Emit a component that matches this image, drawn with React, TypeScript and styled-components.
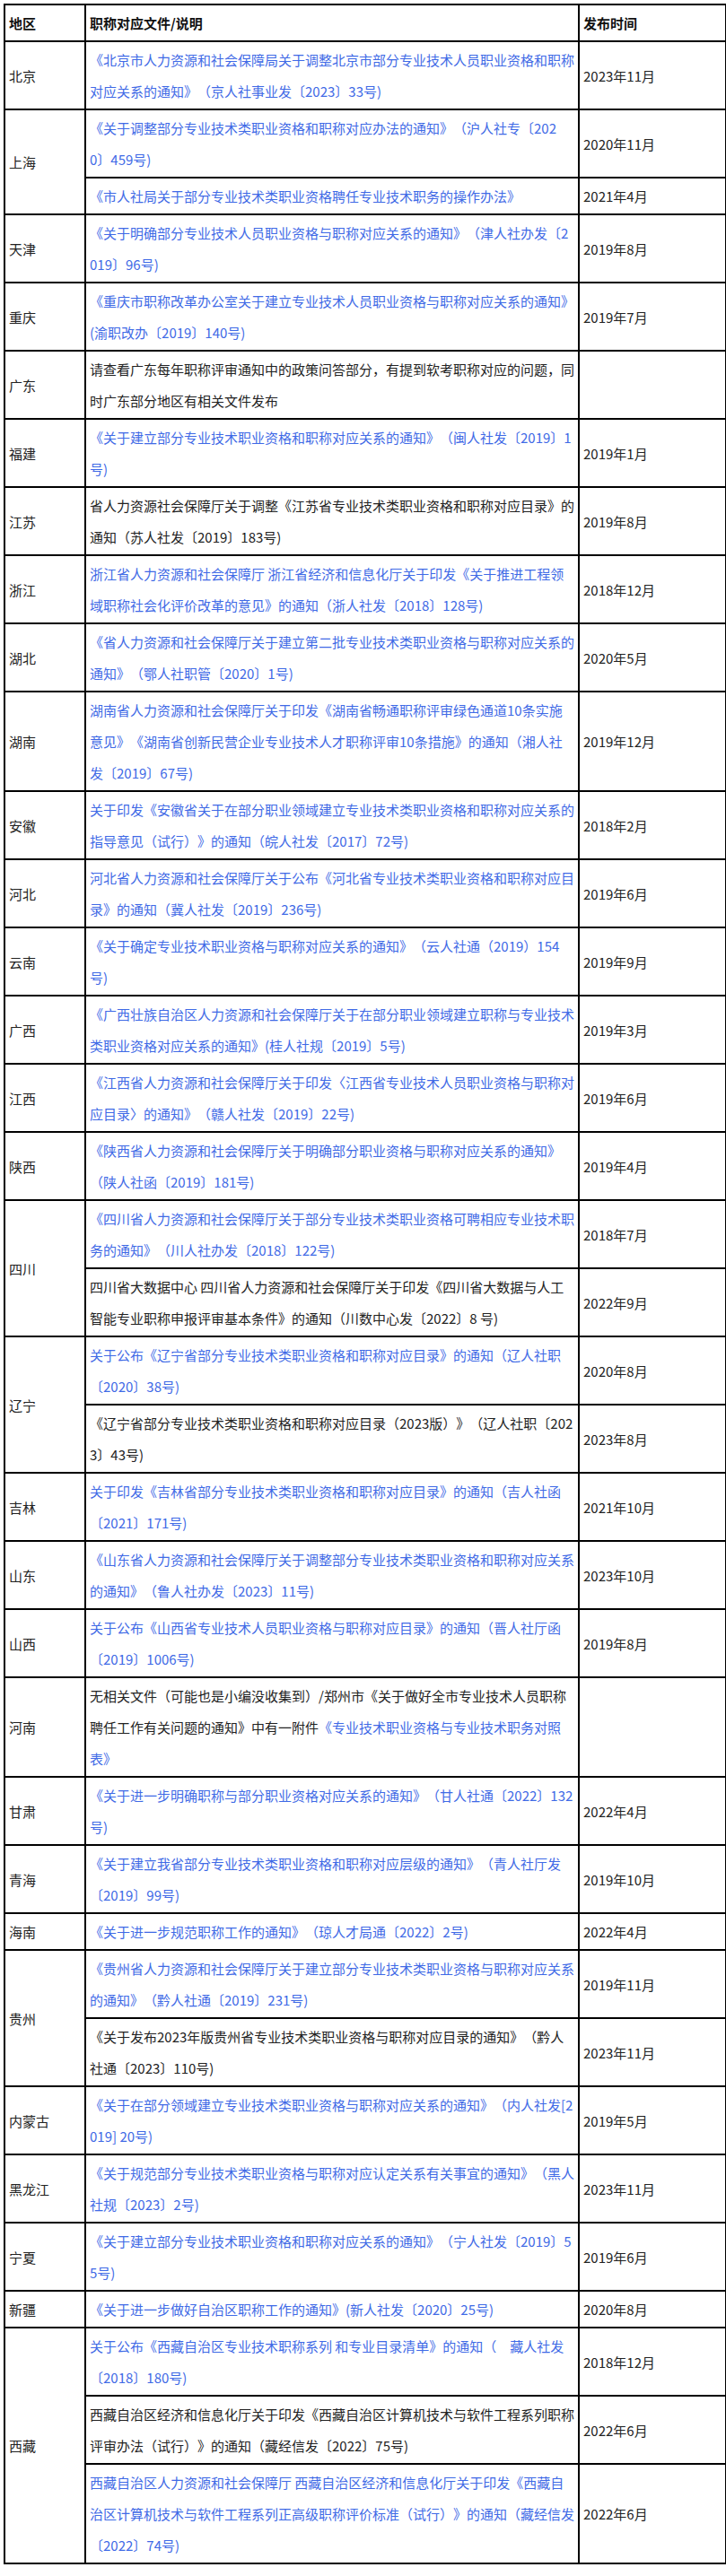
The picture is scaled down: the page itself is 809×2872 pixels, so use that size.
import styled, { createGlobalStyle } from "styled-components";

type Part = { text: string; plain?: boolean };
type Doc = { parts: Part[]; date: string };
type Region = { name: string; docs: Doc[] };

const link = (text: string): Part => ({ text });
const plain = (text: string): Part => ({ text, plain: true });

const regions: Region[] = [
  {
    name: "北京",
    docs: [
      {
        parts: [link("《北京市人力资源和社会保障局关于调整北京市部分专业技术人员职业资格和职称对应关系的通知》（京人社事业发〔2023〕33号)")],
        date: "2023年11月",
      },
    ],
  },
  {
    name: "上海",
    docs: [
      {
        parts: [link("《关于调整部分专业技术类职业资格和职称对应办法的通知》（沪人社专〔2020〕459号)")],
        date: "2020年11月",
      },
      {
        parts: [link("《市人社局关于部分专业技术类职业资格聘任专业技术职务的操作办法》")],
        date: "2021年4月",
      },
    ],
  },
  {
    name: "天津",
    docs: [
      {
        parts: [link("《关于明确部分专业技术人员职业资格与职称对应关系的通知》（津人社办发〔2019〕96号)")],
        date: "2019年8月",
      },
    ],
  },
  {
    name: "重庆",
    docs: [
      {
        parts: [link("《重庆市职称改革办公室关于建立专业技术人员职业资格与职称对应关系的通知》(渝职改办〔2019〕140号)")],
        date: "2019年7月",
      },
    ],
  },
  {
    name: "广东",
    docs: [
      {
        parts: [plain("请查看广东每年职称评审通知中的政策问答部分，有提到软考职称对应的问题，同时广东部分地区有相关文件发布")],
        date: "",
      },
    ],
  },
  {
    name: "福建",
    docs: [
      {
        parts: [link("《关于建立部分专业技术职业资格和职称对应关系的通知》（闽人社发〔2019〕1号)")],
        date: "2019年1月",
      },
    ],
  },
  {
    name: "江苏",
    docs: [
      {
        parts: [plain("省人力资源社会保障厅关于调整《江苏省专业技术类职业资格和职称对应目录》的通知（苏人社发〔2019〕183号)")],
        date: "2019年8月",
      },
    ],
  },
  {
    name: "浙江",
    docs: [
      {
        parts: [link("浙江省人力资源和社会保障厅 浙江省经济和信息化厅关于印发《关于推进工程领域职称社会化评价改革的意见》的通知（浙人社发〔2018〕128号)")],
        date: "2018年12月",
      },
    ],
  },
  {
    name: "湖北",
    docs: [
      {
        parts: [link("《省人力资源和社会保障厅关于建立第二批专业技术类职业资格与职称对应关系的通知》（鄂人社职管〔2020〕1号)")],
        date: "2020年5月",
      },
    ],
  },
  {
    name: "湖南",
    docs: [
      {
        parts: [link("湖南省人力资源和社会保障厅关于印发《湖南省畅通职称评审绿色通道10条实施意见》《湖南省创新民营企业专业技术人才职称评审10条措施》的通知（湘人社发〔2019〕67号)")],
        date: "2019年12月",
      },
    ],
  },
  {
    name: "安徽",
    docs: [
      {
        parts: [link("关于印发《安徽省关于在部分职业领域建立专业技术类职业资格和职称对应关系的指导意见（试行）》的通知（皖人社发〔2017〕72号)")],
        date: "2018年2月",
      },
    ],
  },
  {
    name: "河北",
    docs: [
      {
        parts: [link("河北省人力资源和社会保障厅关于公布《河北省专业技术类职业资格和职称对应目录》的通知（冀人社发〔2019〕236号)")],
        date: "2019年6月",
      },
    ],
  },
  {
    name: "云南",
    docs: [
      {
        parts: [link("《关于确定专业技术职业资格与职称对应关系的通知》（云人社通（2019）154号)")],
        date: "2019年9月",
      },
    ],
  },
  {
    name: "广西",
    docs: [
      {
        parts: [link("《广西壮族自治区人力资源和社会保障厅关于在部分职业领域建立职称与专业技术类职业资格对应关系的通知》(桂人社规〔2019〕5号)")],
        date: "2019年3月",
      },
    ],
  },
  {
    name: "江西",
    docs: [
      {
        parts: [link("《江西省人力资源和社会保障厅关于印发〈江西省专业技术人员职业资格与职称对应目录〉的通知》（赣人社发〔2019〕22号)")],
        date: "2019年6月",
      },
    ],
  },
  {
    name: "陕西",
    docs: [
      {
        parts: [link("《陕西省人力资源和社会保障厅关于明确部分职业资格与职称对应关系的通知》（陕人社函〔2019〕181号)")],
        date: "2019年4月",
      },
    ],
  },
  {
    name: "四川",
    docs: [
      {
        parts: [link("《四川省人力资源和社会保障厅关于部分专业技术类职业资格可聘相应专业技术职务的通知》（川人社办发〔2018〕122号)")],
        date: "2018年7月",
      },
      {
        parts: [plain("四川省大数据中心 四川省人力资源和社会保障厅关于印发《四川省大数据与人工智能专业职称申报评审基本条件》的通知（川数中心发〔2022〕8 号)")],
        date: "2022年9月",
      },
    ],
  },
  {
    name: "辽宁",
    docs: [
      {
        parts: [link("关于公布《辽宁省部分专业技术类职业资格和职称对应目录》的通知（辽人社职〔2020〕38号)")],
        date: "2020年8月",
      },
      {
        parts: [plain("《辽宁省部分专业技术类职业资格和职称对应目录（2023版）》（辽人社职〔2023〕43号)")],
        date: "2023年8月",
      },
    ],
  },
  {
    name: "吉林",
    docs: [
      {
        parts: [link("关于印发《吉林省部分专业技术类职业资格和职称对应目录》的通知（吉人社函〔2021〕171号)")],
        date: "2021年10月",
      },
    ],
  },
  {
    name: "山东",
    docs: [
      {
        parts: [link("《山东省人力资源和社会保障厅关于调整部分专业技术类职业资格和职称对应关系的通知》（鲁人社办发〔2023〕11号)")],
        date: "2023年10月",
      },
    ],
  },
  {
    name: "山西",
    docs: [
      {
        parts: [link("关于公布《山西省专业技术人员职业资格与职称对应目录》的通知（晋人社厅函〔2019〕1006号)")],
        date: "2019年8月",
      },
    ],
  },
  {
    name: "河南",
    docs: [
      {
        parts: [
          plain("无相关文件（可能也是小编没收集到）/郑州市《关于做好全市专业技术人员职称聘任工作有关问题的通知》中有一附件"),
          link("《专业技术职业资格与专业技术职务对照表》"),
        ],
        date: "",
      },
    ],
  },
  {
    name: "甘肃",
    docs: [
      {
        parts: [link("《关于进一步明确职称与部分职业资格对应关系的通知》（甘人社通〔2022〕132号)")],
        date: "2022年4月",
      },
    ],
  },
  {
    name: "青海",
    docs: [
      {
        parts: [link("《关于建立我省部分专业技术类职业资格和职称对应层级的通知》（青人社厅发〔2019〕99号)")],
        date: "2019年10月",
      },
    ],
  },
  {
    name: "海南",
    docs: [
      {
        parts: [link("《关于进一步规范职称工作的通知》（琼人才局通〔2022〕2号)")],
        date: "2022年4月",
      },
    ],
  },
  {
    name: "贵州",
    docs: [
      {
        parts: [link("《贵州省人力资源和社会保障厅关于建立部分专业技术类职业资格与职称对应关系的通知》（黔人社通〔2019〕231号)")],
        date: "2019年11月",
      },
      {
        parts: [plain("《关于发布2023年版贵州省专业技术类职业资格与职称对应目录的通知》（黔人社通〔2023〕110号)")],
        date: "2023年11月",
      },
    ],
  },
  {
    name: "内蒙古",
    docs: [
      {
        parts: [link("《关于在部分领域建立专业技术类职业资格与职称对应关系的通知》（内人社发[2019] 20号)")],
        date: "2019年5月",
      },
    ],
  },
  {
    name: "黑龙江",
    docs: [
      {
        parts: [link("《关于规范部分专业技术类职业资格与职称对应认定关系有关事宜的通知》（黑人社规〔2023〕2号)")],
        date: "2023年11月",
      },
    ],
  },
  {
    name: "宁夏",
    docs: [
      {
        parts: [link("《关于建立部分专业技术职业资格和职称对应关系的通知》（宁人社发〔2019〕55号)")],
        date: "2019年6月",
      },
    ],
  },
  {
    name: "新疆",
    docs: [
      {
        parts: [link("《关于进一步做好自治区职称工作的通知》(新人社发〔2020〕25号)")],
        date: "2020年8月",
      },
    ],
  },
  {
    name: "西藏",
    docs: [
      {
        parts: [link("关于公布《西藏自治区专业技术职称系列 和专业目录清单》的通知（　藏人社发〔2018〕180号)")],
        date: "2018年12月",
      },
      {
        parts: [plain("西藏自治区经济和信息化厅关于印发《西藏自治区计算机技术与软件工程系列职称评审办法（试行）》的通知（藏经信发〔2022〕75号)")],
        date: "2022年6月",
      },
      {
        parts: [link("西藏自治区人力资源和社会保障厅 西藏自治区经济和信息化厅关于印发《西藏自治区计算机技术与软件工程系列正高级职称评价标准（试行）》的通知（藏经信发〔2022〕74号)")],
        date: "2022年6月",
      },
    ],
  },
];

const GlobalStyle = createGlobalStyle`
  body {
    margin: 0;
    background: #fff;
    font-family: "Noto Sans CJK SC", "Noto Sans", sans-serif;
    color: #222;
  }
`;

const Page = styled.div`
  padding: 4px 1px 4px 4px;
`;

const Table = styled.table`
  width: 804px;
  table-layout: fixed;
  border-collapse: collapse;
  font-size: 15px;
  line-height: 35px;
  word-break: break-all;
  text-spacing-trim: space-all;
  font-feature-settings: "halt" 0, "chws" 0;
`;

const Cell = styled.td`
  border: 2px solid #000;
  padding: 2px 3.5px 2px 4px;
  vertical-align: middle;
  text-align: left;
`;

const HeadCell = styled.th`
  border: 2px solid #000;
  padding: 2px 3.5px 2px 4px;
  font-weight: bold;
  text-align: left;
  color: #111;
`;

const Doc = styled.span<{ $plain?: boolean }>`
  color: ${(p) => (p.$plain ? "#222" : "#3f6ae6")};
`;

export default function App() {
  return (
    <Page>
      <GlobalStyle />
      <Table>
        <colgroup>
          <col style={{ width: 90 }} />
          <col style={{ width: 550 }} />
          <col style={{ width: 164 }} />
        </colgroup>
        <thead>
          <tr>
            <HeadCell>地区</HeadCell>
            <HeadCell>职称对应文件/说明</HeadCell>
            <HeadCell>发布时间</HeadCell>
          </tr>
        </thead>
        <tbody>
          {regions.map((region) =>
            region.docs.map((doc, i) => (
              <tr key={region.name + i}>
                {i === 0 && <Cell rowSpan={region.docs.length}>{region.name}</Cell>}
                <Cell>
                  {doc.parts.map((part, j) => (
                    <Doc key={j} $plain={part.plain}>
                      {part.text}
                    </Doc>
                  ))}
                </Cell>
                <Cell>{doc.date}</Cell>
              </tr>
            ))
          )}
        </tbody>
      </Table>
    </Page>
  );
}
